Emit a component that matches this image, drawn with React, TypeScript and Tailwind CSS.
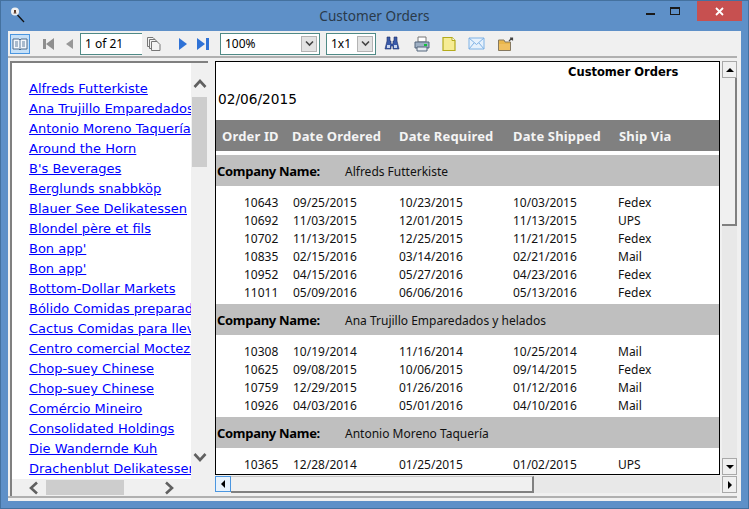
import React from 'react'

const companies = [
  'Alfreds Futterkiste',
  'Ana Trujillo Emparedados y helados',
  'Antonio Moreno Taquería',
  'Around the Horn',
  "B's Beverages",
  'Berglunds snabbköp',
  'Blauer See Delikatessen',
  'Blondel père et fils',
  "Bon app'",
  "Bon app'",
  'Bottom-Dollar Markets',
  'Bólido Comidas preparadas',
  'Cactus Comidas para llevar',
  'Centro comercial Moctezuma',
  'Chop-suey Chinese',
  'Chop-suey Chinese',
  'Comércio Mineiro',
  'Consolidated Holdings',
  'Die Wandernde Kuh',
  'Drachenblut Delikatessen',
]

const groups = [
  {
    name: 'Alfreds Futterkiste',
    rows: [
      ['10643', '09/25/2015', '10/23/2015', '10/03/2015', 'Fedex'],
      ['10692', '11/03/2015', '12/01/2015', '11/13/2015', 'UPS'],
      ['10702', '11/13/2015', '12/25/2015', '11/21/2015', 'Fedex'],
      ['10835', '02/15/2016', '03/14/2016', '02/21/2016', 'Mail'],
      ['10952', '04/15/2016', '05/27/2016', '04/23/2016', 'Fedex'],
      ['11011', '05/09/2016', '06/06/2016', '05/13/2016', 'Fedex'],
    ],
  },
  {
    name: 'Ana Trujillo Emparedados y helados',
    rows: [
      ['10308', '10/19/2014', '11/16/2014', '10/25/2014', 'Mail'],
      ['10625', '09/08/2015', '10/06/2015', '09/14/2015', 'Fedex'],
      ['10759', '12/29/2015', '01/26/2016', '01/12/2016', 'Mail'],
      ['10926', '04/03/2016', '05/01/2016', '04/10/2016', 'Mail'],
    ],
  },
  {
    name: 'Antonio Moreno Taquería',
    rows: [['10365', '12/28/2014', '01/25/2015', '01/02/2015', 'UPS']],
  },
]

const Chevron = ({ d }: { d: string }) => (
  <svg width="14" height="14" viewBox="0 0 14 14" fill="none" stroke="#606060" strokeWidth="2.6">
    <path d={d} />
  </svg>
)

const Triangle = ({ d, fill = '#808080', size = 14 }: { d: string; fill?: string; size?: number }) => (
  <svg width={size} height={size} viewBox="0 0 14 14">
    <path d={d} fill={fill} />
  </svg>
)

const SmallArrow = ({ d }: { d: string }) => (
  <svg width="12" height="12" viewBox="0 0 12 12">
    <path d={d} fill="#000" />
  </svg>
)

const SpinButton = ({ d }: { d: string }) => (
  <div className="flex h-[17px] w-[15px] items-center justify-center border border-[#a9a9a9] bg-[#f0f0f0]">
    <SmallArrow d={d} />
  </div>
)

const Combo = ({ value, width }: { value: string; width: string }) => (
  <div className={`flex h-[22px] items-center justify-between border border-[#4f8a86] bg-white pl-[4px] pr-[2px] ${width}`}>
    <span>{value}</span>
    <div className="flex h-[16px] w-[16px] items-center justify-center border border-[#b4b4b4] bg-[#e3e3e3]">
      <svg width="9" height="7" viewBox="0 0 9 7" fill="none" stroke="#444" strokeWidth="1.6">
        <path d="M1 1.5 L4.5 5 L8 1.5" />
      </svg>
    </div>
  </div>
)

function Toolbar() {
  return (
    <div className="flex h-[25px] items-center bg-[#f0f0f0] pl-[2px] text-[12px] text-black [font-family:'Noto_Sans',sans-serif]">
      <div className="flex h-[20px] w-[20px] items-center justify-center border border-[#4a96e0] bg-[#c5e0f8]">
        <svg width="16" height="14" viewBox="0 0 16 14">
          <path d="M1 2 H7 L8 3 L9 2 H15 V12 H9 L8 13 L7 12 H1 Z" fill="#f4f8fc" stroke="#4d6a8a" />
          <path d="M8 3 V12 M3 5 H6 M3 7 H6 M3 9 H6 M10 5 H13 M10 7 H13 M10 9 H13" stroke="#5f7f9f" />
        </svg>
      </div>
      <div className="ml-[12px]"><Triangle d="M1 2 H4 V12 H1 Z M12 1 V13 L4 7 Z" fill="#8f8f8f" /></div>
      <div className="ml-[7px]"><Triangle d="M10 2 V12 L3 7 Z" fill="#989898" /></div>
      <div className="ml-[3px] flex h-[22px] w-[62px] items-center border border-r-0 border-[#4f8a86] bg-white pl-[4px]">1 of 21</div>
      <svg className="ml-[4px]" width="16" height="16" viewBox="0 0 16 16" fill="#f4f4f4" stroke="#777">
        <path d="M1.5 1.5 H7 L9 3.5 V10.5 H1.5 Z" />
        <path d="M3.5 3.5 H9 L11 5.5 V12.5 H3.5 Z" />
        <path d="M5.5 5.5 H11 L14 8.5 V14.5 H5.5 Z" />
      </svg>
      <div className="ml-[14px]"><Triangle d="M3 1 L11 7 L3 13 Z" fill="#2f72d6" /></div>
      <div className="ml-[6px]"><Triangle d="M1 1 L9 7 L1 13 Z M10 1 H13 V13 H10 Z" fill="#2f72d6" /></div>
      <div className="ml-[10px]"><Combo value="100%" width="w-[100px]" /></div>
      <div className="ml-[6px]"><Combo value="1x1" width="w-[50px]" /></div>
      <svg className="ml-[8px]" width="16" height="16" viewBox="0 0 16 16">
        <path d="M3 1 H6 V5 H7 V8 H9 V5 H10 V1 H13 V5 L15 13 H9 V10 H7 V13 H1 L3 5 Z" fill="#3a5aa8" stroke="#1f2f6a" strokeWidth="0.6" />
        <path d="M3 9 H6 V12 H3 Z M10 9 H13 V12 H10 Z" fill="#c9d6ef" />
      </svg>
      <svg className="ml-[14px]" width="16" height="16" viewBox="0 0 16 16">
        <path d="M4 1 H12 V6 H4 Z" fill="#fff" stroke="#777" />
        <path d="M1 6 H15 V12 H1 Z" fill="#9fb0c4" stroke="#55677d" />
        <path d="M3 11 H13 V15 H3 Z" fill="#e4e9ef" stroke="#55677d" />
        <path d="M10 8 H13 V10 H10 Z" fill="#12c23a" />
      </svg>
      <svg className="ml-[12px]" width="14" height="16" viewBox="0 0 14 16">
        <path d="M1 1.5 H10 L13 4.5 V14.5 H1 Z" fill="#f6ec94" stroke="#b4ab1c" strokeWidth="1.2" />
        <path d="M10 1.5 V4.5 H13" fill="#fff" stroke="#b4ab1c" />
      </svg>
      <svg className="ml-[12px]" width="17" height="13" viewBox="0 0 17 13">
        <path d="M1 1 H16 V12 H1 Z" fill="#e6f1fc" stroke="#7fb2e5" />
        <path d="M1 1 L8.5 7.5 L16 1 M1 12 L6 6 M16 12 L11 6" fill="none" stroke="#7fb2e5" />
      </svg>
      <svg className="ml-[13px]" width="16" height="14" viewBox="0 0 16 14">
        <path d="M0.5 3 H6 L7 5 H12.5 V13.5 H0.5 Z" fill="#e8b64c" stroke="#85785f" />
        <path d="M1 7 H12 V13 H1 Z" fill="#f0c060" />
        <path d="M11 4 L14 1 M12 1 H14.5 V3.5" fill="none" stroke="#444" strokeWidth="1.2" />
      </svg>
    </div>
  )
}

function CompanyList() {
  return (
    <div className="flex h-[435px] w-[198px] flex-col border-2 border-r-0 border-b-0 border-[#808080] bg-[#f0f0f0]">
      <div className="flex min-h-0 flex-1">
        <div className="w-[179px] overflow-hidden bg-white pl-[17px] pt-[16px] text-[13px] leading-[20px] text-[#0000ff] [font-family:'DejaVu_Sans',sans-serif]">
          {companies.map((name, i) => (
            <div key={i} className="whitespace-nowrap underline">
              {name}
            </div>
          ))}
        </div>
        <div className="flex w-[17px] flex-col items-center">
          <div className="h-[34px] pt-[14px]">
            <Chevron d="M1.5 10 L7 4 L12.5 10" />
          </div>
          <div className="h-[70px] w-[15px] bg-[#cdcdcd]" />
          <div className="flex-1" />
          <div className="h-[29px]">
            <Chevron d="M1.5 4 L7 10 L12.5 4" />
          </div>
        </div>
      </div>
      <div className="flex h-[17px] items-center pl-[15px]">
        <Chevron d="M10 1.5 L4 7 L10 12.5" />
        <div className="ml-[5px] h-[15px] w-[78px] bg-[#cdcdcd]" />
        <div className="ml-[38px]">
          <Chevron d="M4 1.5 L10 7 L4 12.5" />
        </div>
      </div>
    </div>
  )
}

function Report() {
  return (
    <div className="h-[414px] w-[505px] overflow-hidden border border-black bg-white text-[12px] text-[#111] [font-family:'Noto_Sans',sans-serif]">
      <div className="h-[58px] pt-[2px] leading-[16px] text-black [font-family:'DejaVu_Sans',sans-serif]">
        <div className="pl-[352px] text-[11.5px] font-bold">Customer Orders</div>
        <div className="mt-[11px] pl-[2px] text-[13.7px]">02/06/2015</div>
      </div>
      <div className="grid h-[31px] grid-cols-[70px_107px_114px_106px_1fr] items-center bg-[#808080] pl-[6px] pt-[2px] text-[13px] font-bold tracking-[0.15px] text-[#f4f4f4]">
        <span>Order ID</span>
        <span>Date Ordered</span>
        <span>Date Required</span>
        <span>Date Shipped</span>
        <span>Ship Via</span>
      </div>
      <div className="h-[4px]" />
      {groups.map(group => (
        <div key={group.name}>
          <div className="flex h-[31px] items-center bg-[#bfbfbf] pt-[2px]">
            <span className="w-[129px] pl-[1px] text-[13px] font-bold tracking-[-0.3px] text-black">Company Name:</span>
            <span>{group.name}</span>
          </div>
          <div className="pb-[2px] pt-[8px]">
            {group.rows.map(row => (
              <div key={row[0]} className="grid h-[18px] grid-cols-[28px_49px_106px_114px_105px_1fr] items-center">
                <span />
                <span>{row[0]}</span>
                <span>{row[1]}</span>
                <span>{row[2]}</span>
                <span>{row[3]}</span>
                <span>{row[4]}</span>
              </div>
            ))}
          </div>
        </div>
      ))}
    </div>
  )
}

export default function App() {
  return (
    <div className="flex h-[509px] w-[749px] flex-col overflow-hidden border border-[#44719f] bg-[#5e90c8] [font-family:'Noto_Sans',sans-serif]">
      <div className="grid h-[30px] shrink-0 grid-cols-[1fr_auto_1fr] items-start">
        <svg className="ml-[9px] mt-[6px]" width="16" height="16" viewBox="0 0 16 16">
          <circle cx="5" cy="4.5" r="4" fill="#f2f2f2" />
          <path d="M3.5 6.5 C3.5 4.5 6.5 4.5 6.5 6.5 Z M4 3 H6 V5 H4 Z" fill="#5a3a28" />
          <path d="M7.5 8 L14 15" stroke="#111" strokeWidth="1.3" />
        </svg>
        <div className="pt-[6px] text-center text-[13.6px] leading-[18px] text-[#2a3a4a]">Customer Orders</div>
        <div className="flex h-[20px] items-start justify-end pr-[6px]">
          <div className="mr-[15px] mt-[12px] h-[2px] w-[9px] bg-[#1a1a1a]" />
          <div className="mr-[17px] mt-[6px] h-[8px] w-[10px] border border-t-2 border-[#1a1a1a]" />
          <div className="flex h-[20px] w-[45px] items-center justify-center bg-[#c75050]">
            <svg width="9" height="9" viewBox="0 0 9 9" stroke="#fff" strokeWidth="1.8">
              <path d="M1 1 L8 8 M8 1 L1 8" />
            </svg>
          </div>
        </div>
      </div>
      <div className="mx-[7px] mb-[7px] flex min-h-0 flex-1 flex-col bg-[#f0f0f0]">
        <Toolbar />
        <div className="mr-[4px] h-[2px] bg-[#b0b0b0]" />
        <div className="flex pl-[2px] pt-[3px]">
          <CompanyList />
          <div className="ml-[7px] flex flex-col">
            <div className="flex">
              <Report />
              <div className="ml-[2px] flex h-[414px] w-[15px] flex-col">
                <SpinButton d="M2 8 L6 4 L10 8 Z" />
                <div className="h-[148px] border-b-2 border-r-2 border-[#808080] bg-[#f0f0f0]" />
                <div className="flex-1 bg-[#e8e8e8]" />
                <SpinButton d="M2 4 L10 4 L6 8 Z" />
              </div>
            </div>
            <div className="mt-[1px] flex h-[17px]">
              <div className="flex h-[16px] w-[16px] items-center justify-center border border-[#4a96e0] bg-[#e8f2fc]">
                <SmallArrow d="M8 2 V10 L4 6 Z" />
              </div>
              <div className="h-[17px] w-[303px] border-b-2 border-r-2 border-t border-[#808080] border-t-[#c8c8c8] bg-[#f0f0f0]" />
              <div className="h-[17px] w-[186px] bg-[#e8e8e8]" />
              <div className="ml-[2px]">
                <SpinButton d="M4 2 L8 6 L4 10 Z" />
              </div>
            </div>
          </div>
        </div>
        <div className="flex-1" />
        <div className="mb-[3px] mr-[4px] h-[2px] bg-[#b0b0b0]" />
      </div>
    </div>
  )
}
